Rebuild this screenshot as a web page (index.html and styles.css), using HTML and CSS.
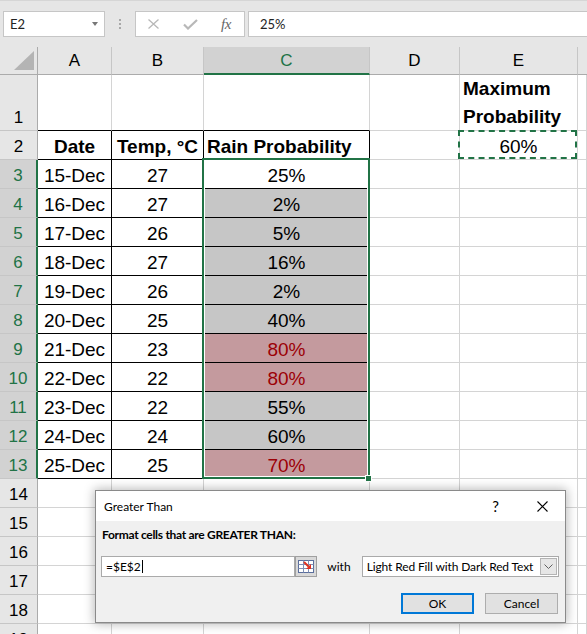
FILE: index.html
```html
<!DOCTYPE html>
<html>
<head>
<meta charset="utf-8">
<link rel="stylesheet" href="styles.css">
</head>
<body>
<div class="app">
  <div class="toolbar">
    <div class="namebox"><span>E2</span><span class="caret-dn"></span></div>
    <div class="dots"><i></i><i></i><i></i></div>
    <div class="fxbox">
      <svg class="ic-x" width="11" height="10" viewBox="0 0 11 10"><path d="M0.5 0.5L10.5 9.5M10.5 0.5L0.5 9.5" stroke="#b8b8b8" stroke-width="1.3" fill="none"/></svg>
      <svg class="ic-ok" width="15" height="11" viewBox="0 0 15 11"><path d="M1 5.5L5 9.5L14 1" fill="none" stroke="#b8b8b8" stroke-width="2.2"/></svg>
      <span class="fx">fx</span>
    </div>
    <div class="formula">25%</div>
  </div>

  <div class="sheet">
    <div class="corner"><svg width="20" height="19" viewBox="0 0 20 19"><polygon points="20,0 20,19 0,19" fill="#b4b4b4"/></svg></div>
    <div class="h">A</div><div class="h">B</div><div class="h hs">C</div><div class="h">D</div><div class="h">E</div><div class="h hf"></div>

    <div class="r">1</div><div class="c tt"></div><div class="c tt"></div><div class="c tt"></div><div class="c"></div><div class="c wrap">Maximum Probability</div><div class="c"></div>

    <div class="r">2</div><div class="c tb b">Date</div><div class="c tb b">Temp, °C</div><div class="c tb b left">Rain Probability</div><div class="c"></div><div class="c ants">60%</div><div class="c"></div>

    <div class="r rs">3</div><div class="c tb">15-Dec</div><div class="c tb">27</div><div class="c tb">25%</div><div class="c"></div><div class="c"></div><div class="c"></div>
    <div class="r rs">4</div><div class="c tb">16-Dec</div><div class="c tb">27</div><div class="c tb g">2%</div><div class="c"></div><div class="c"></div><div class="c"></div>
    <div class="r rs">5</div><div class="c tb">17-Dec</div><div class="c tb">26</div><div class="c tb g">5%</div><div class="c"></div><div class="c"></div><div class="c"></div>
    <div class="r rs">6</div><div class="c tb">18-Dec</div><div class="c tb">27</div><div class="c tb g">16%</div><div class="c"></div><div class="c"></div><div class="c"></div>
    <div class="r rs">7</div><div class="c tb">19-Dec</div><div class="c tb">26</div><div class="c tb g">2%</div><div class="c"></div><div class="c"></div><div class="c"></div>
    <div class="r rs">8</div><div class="c tb">20-Dec</div><div class="c tb">25</div><div class="c tb g">40%</div><div class="c"></div><div class="c"></div><div class="c"></div>
    <div class="r rs">9</div><div class="c tb">21-Dec</div><div class="c tb">23</div><div class="c tb p">80%</div><div class="c"></div><div class="c"></div><div class="c"></div>
    <div class="r rs">10</div><div class="c tb">22-Dec</div><div class="c tb">22</div><div class="c tb p">80%</div><div class="c"></div><div class="c"></div><div class="c"></div>
    <div class="r rs">11</div><div class="c tb">23-Dec</div><div class="c tb">22</div><div class="c tb g">55%</div><div class="c"></div><div class="c"></div><div class="c"></div>
    <div class="r rs">12</div><div class="c tb">24-Dec</div><div class="c tb">24</div><div class="c tb g">60%</div><div class="c"></div><div class="c"></div><div class="c"></div>
    <div class="r rs">13</div><div class="c tb">25-Dec</div><div class="c tb">25</div><div class="c tb p">70%</div><div class="c"></div><div class="c"></div><div class="c"></div>

    <div class="r">14</div><div class="c"></div><div class="c"></div><div class="c"></div><div class="c"></div><div class="c"></div><div class="c"></div>
    <div class="r">15</div><div class="c"></div><div class="c"></div><div class="c"></div><div class="c"></div><div class="c"></div><div class="c"></div>
    <div class="r">16</div><div class="c"></div><div class="c"></div><div class="c"></div><div class="c"></div><div class="c"></div><div class="c"></div>
    <div class="r">17</div><div class="c"></div><div class="c"></div><div class="c"></div><div class="c"></div><div class="c"></div><div class="c"></div>
    <div class="r">18</div><div class="c"></div><div class="c"></div><div class="c"></div><div class="c"></div><div class="c"></div><div class="c"></div>
    <div class="r">19</div><div class="c"></div><div class="c"></div><div class="c"></div><div class="c"></div><div class="c"></div><div class="c"></div>

    <div class="selbox"><div class="handle"></div></div>
  </div>

  <div class="dlg">
    <div class="dlg-title">
      <span class="ttl">Greater Than</span>
      <span class="help">?</span>
      <svg class="close" width="11" height="11" viewBox="0 0 11 11"><path d="M0.5 0.5L10.5 10.5M10.5 0.5L0.5 10.5" stroke="#000" stroke-width="1.1" fill="none"/></svg>
    </div>
    <div class="dlg-body">
      <div class="lbl">Format cells that are GREATER THAN:</div>
      <div class="frow">
        <div class="inp">=$E$2<span class="cur"></span></div>
        <div class="rbtn">
          <svg width="16" height="13" viewBox="0 0 16 13">
            <rect x="0.5" y="0.5" width="15" height="12" fill="#fff" stroke="#5a6e9c"/>
            <path d="M0.5 4.5H15.5M0.5 8.5H15.5M5.5 0.5V12.5M10.5 0.5V12.5" stroke="#7f8fb5" fill="none"/>
            <path d="M6 2L10.5 6.5" stroke="#e0301e" stroke-width="2"/>
            <polygon points="13,9 13,4 8,9" fill="#e0301e"/>
          </svg>
        </div>
        <span class="with">with</span>
        <div class="combo"><span class="ctext">Light Red Fill with Dark Red Text</span><span class="dd"><svg width="9" height="5" viewBox="0 0 9 5"><path d="M0.5 0.5L4.5 4.5L8.5 0.5" stroke="#606060" fill="none"/></svg></span></div>
      </div>
      <div class="btns">
        <div class="btn ok">OK</div>
        <div class="btn">Cancel</div>
      </div>
    </div>
  </div>
</div>
</body>
</html>
```

FILE: styles.css
```css
* { box-sizing: border-box; margin: 0; padding: 0; }
html, body { width: 587px; height: 634px; overflow: hidden; background: #fff; }
body { font-family: "Liberation Sans", Arial, sans-serif; color: #000; }

.app { position: relative; width: 587px; height: 634px; overflow: hidden; }

/* formula bar */
.toolbar {
  height: 47px;
  background: #e6e6e6;
  border-top: 1px solid #d6d6d6;
  padding-top: 10px;
  display: flex;
  align-items: flex-start;
  font-family: Lato, "Noto Sans", sans-serif;
  font-size: 13px;
  color: #222;
}
.namebox {
  margin-left: 3px;
  width: 102px;
  height: 26px;
  background: #fff;
  border: 1px solid #c6c6c6;
  display: flex;
  align-items: center;
  justify-content: space-between;
  padding: 0 6px 0 6px;
}
.caret-dn {
  width: 0; height: 0;
  border-left: 3.5px solid transparent;
  border-right: 3.5px solid transparent;
  border-top: 4px solid #777;
}
.dots {
  width: 30px;
  display: flex;
  flex-direction: column;
  align-items: center;
  gap: 2px;
  padding-top: 8px;
}
.dots i { display: block; width: 2px; height: 2px; background: #a8a8a8; }
.fxbox {
  width: 110px;
  height: 26px;
  background: #fff;
  border: 1px solid #c6c6c6;
  display: flex;
  align-items: center;
  padding-left: 12px;
}
.ic-ok { margin-left: 24px; }
.fx {
  margin-left: 23px;
  font-family: "Liberation Serif", serif;
  font-style: italic;
  font-size: 15px;
  color: #666;
  letter-spacing: -0.5px;
}
.formula {
  flex: 1;
  margin-left: 3px;
  height: 26px;
  background: #fff;
  border: 1px solid #c6c6c6;
  border-right: none;
  padding-left: 11px;
  display: flex;
  align-items: center;
}

/* sheet */
.sheet {
  position: relative;
  display: grid;
  grid-template-columns: 38px 74px 92px 166px 90px 118px 1fr;
  grid-template-rows: 28px 56px repeat(18, 29px);
}
.corner {
  background: #e6e6e6;
  border-right: 1px solid #ababab;
  border-bottom: 1px solid #ababab;
  display: flex;
  align-items: flex-end;
  justify-content: flex-end;
  padding: 0 3px 4px 0;
}
.corner svg { display: block; }
.h {
  background: #e6e6e6;
  border-right: 1px solid #c6c6c6;
  border-bottom: 1px solid #ababab;
  display: flex;
  align-items: center;
  justify-content: center;
  font-size: 17px;
}
.hs { background: #d2d2d2; color: #217346; border-bottom: 2px solid #217346; padding-top: 1px; }
.hf { border-right: none; }
.r {
  background: #e6e6e6;
  border-right: 1px solid #ababab;
  border-bottom: 1px solid #c6c6c6;
  display: flex;
  align-items: flex-end;
  justify-content: center;
  font-size: 17px;
  line-height: 19px;
  padding-bottom: 3px;
}
.rs { background: #d2d2d2; color: #217346; border-right: 2px solid #217346; }
.c {
  border-right: 1px solid #d4d4d4;
  border-bottom: 1px solid #d4d4d4;
  display: flex;
  align-items: flex-end;
  justify-content: center;
  font-size: 19px;
  line-height: 21px;
  padding-bottom: 2px;
  white-space: nowrap;
}
.tb { border-right-color: #000; border-bottom-color: #000; }
.tt { border-bottom-color: #000; }
.b { font-weight: bold; }
.left { justify-content: flex-start; padding-left: 3px; }
.wrap {
  white-space: normal;
  align-items: flex-start;
  justify-content: flex-start;
  padding: 0 0 0 3px;
  line-height: 28px;
  font-weight: bold;
}
.g { background: #c6c6c6; }
.p { background: #c49a9e; color: #9c0006; }
.ants { position: relative; }
.ants::after {
  content: "";
  position: absolute;
  left: -2px; top: -1px; right: 0; bottom: 0;
  border: 2px dashed #217346;
}
.selbox {
  position: absolute;
  left: 202px;
  top: 111px;
  width: 168px;
  height: 321px;
  border: 2px solid #217346;
  box-shadow: inset 0 0 0 1px #fff;
  pointer-events: none;
}
.handle {
  position: absolute;
  right: -4px;
  bottom: -5px;
  width: 7px;
  height: 7px;
  background: #217346;
  border: 1px solid #fff;
}

/* dialog */
.dlg {
  position: absolute;
  left: 95px;
  top: 490px;
  width: 471px;
  height: 133px;
  background: #f0f0f0;
  border: 1px solid #8a8a8a;
  box-shadow: 0 0 10px 1px rgba(0,0,0,0.28);
  font-family: Lato, "Noto Sans", sans-serif;
  font-size: 12px;
  color: #000;
}
.dlg-title {
  height: 30px;
  background: #fff;
  display: flex;
  align-items: center;
  padding-left: 8px;
  padding-right: 17px;
}
.ttl { flex: 1; font-size: 12px; }
.help { font-size: 15px; margin-right: 38px; }
.close { display: block; }
.dlg-body { padding: 6px 6px 0 5px; }
.lbl { font-weight: bold; line-height: 16px; margin-left: 1px; letter-spacing: -0.3px; }
.frow { display: flex; align-items: center; margin-top: 13px; height: 21px; }
.inp {
  width: 195px;
  height: 21px;
  background: #fff;
  border: 1px solid #aaaaaa;
  display: flex;
  align-items: center;
  padding-left: 4px;
}
.cur { display: inline-block; width: 1px; height: 13px; background: #000; margin-left: 1px; }
.rbtn {
  width: 22px;
  height: 21px;
  background: #d9d9d9;
  border: 1px solid #a0a0a0;
  display: flex;
  align-items: center;
  justify-content: center;
}
.with { margin: 0 11px 0 10px; }
.combo {
  width: 198px;
  height: 21px;
  background: #fff;
  border: 1px solid #aaaaaa;
  display: flex;
  align-items: center;
  justify-content: space-between;
  padding: 0 1px 0 4px;
}
.ctext { letter-spacing: -0.12px; }
.dd {
  width: 17px;
  height: 17px;
  background: #e6e6e6;
  border: 1px solid #b4b4b4;
  display: flex;
  align-items: center;
  justify-content: center;
}
.btns { display: flex; justify-content: flex-end; gap: 11px; margin-top: 16px; padding-right: 1px; }
.btn {
  width: 73px;
  height: 21px;
  background: #e1e1e1;
  border: 1px solid #adadad;
  display: flex;
  align-items: center;
  justify-content: center;
}
.ok { border: 2px solid #0078d7; }
```
